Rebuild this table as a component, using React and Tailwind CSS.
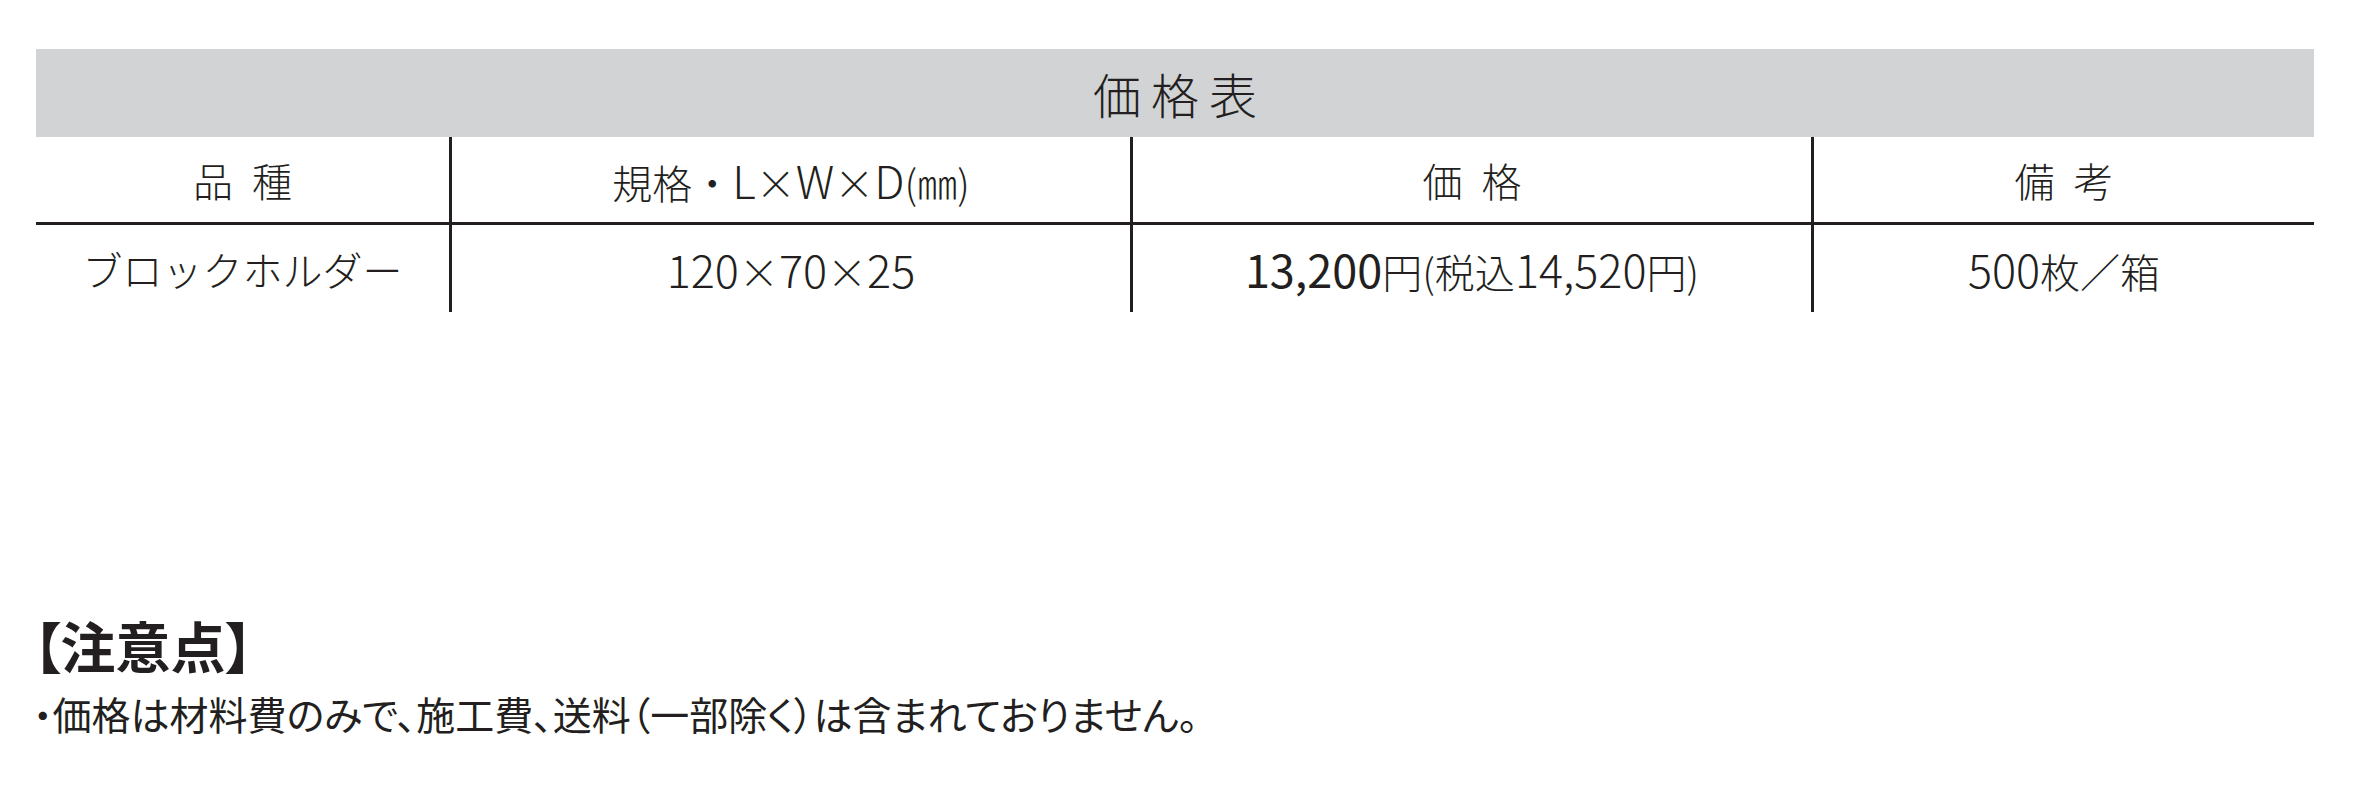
function N({ children, className = "" }) {
  return <span className={`text-[45px] ${className}`}>{children}</span>;
}

export default function App() {
  const cell = "flex items-center justify-center text-[40px] leading-none font-light";
  return (
    <div className="w-[2358px] h-[794px] bg-white text-[#231f20] font-['Noto_Sans_CJK_JP',sans-serif] pt-[49px] pl-[36px]">
      <div className="w-[2278px]">
        <div className="h-[88px] bg-[#d1d3d4] flex items-center justify-center text-[48px] leading-none font-light tracking-[10px] pl-[10px]">
          価格表
        </div>
        <div className="grid grid-cols-[413px_681px_681px_503px]">
          <div className={`${cell} h-[88px] border-b-[3px] border-[#231f20] tracking-[19px] pl-[19px]`}>品種</div>
          <div className={`${cell} h-[88px] border-b-[3px] border-l-[3px] border-[#231f20]`}>
            <span>規格・<N>L</N>×<N>W</N>×<N>D</N>(㎜)</span>
          </div>
          <div className={`${cell} h-[88px] border-b-[3px] border-l-[3px] border-[#231f20] tracking-[19px] pl-[19px]`}>価格</div>
          <div className={`${cell} h-[88px] border-b-[3px] border-l-[3px] border-[#231f20] tracking-[19px] pl-[19px]`}>備考</div>
          <div className={`${cell} h-[87px]`}>ブロックホルダー</div>
          <div className={`${cell} h-[87px] border-l-[3px] border-[#231f20]`}>
            <span><N>120</N>×<N>70</N>×<N>25</N></span>
          </div>
          <div className={`${cell} h-[87px] border-l-[3px] border-[#231f20]`}>
            <span>
              <N className="font-normal">13,200</N>円(税込<N>14,520</N>円)
            </span>
          </div>
          <div className={`${cell} h-[87px] border-l-[3px] border-[#231f20]`}>
            <span><N>500</N>枚／箱</span>
          </div>
        </div>
      </div>
      <div className="mt-[305px] [font-feature-settings:'palt'] -ml-[3px]">
        <div className="text-[55px] leading-none font-bold">【注意点】</div>
        <div className="mt-[22px] text-[39px] leading-none">・価格は材料費のみで、施工費、送料（一部除く）は含まれておりません。</div>
      </div>
    </div>
  );
}
